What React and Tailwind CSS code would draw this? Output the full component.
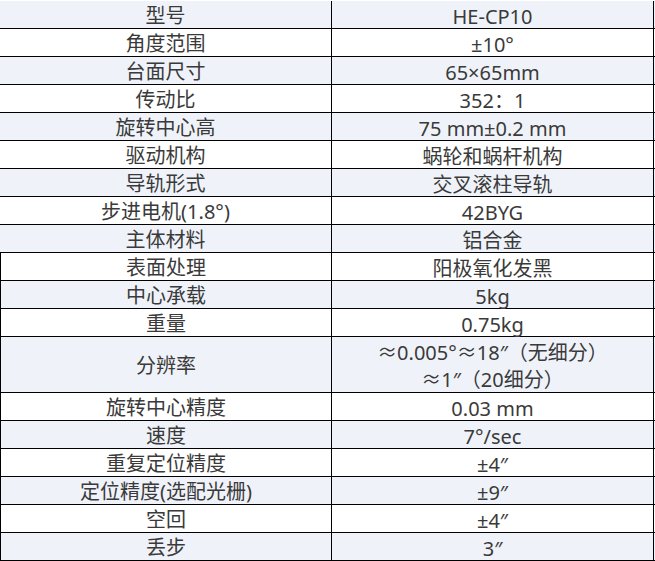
import React from 'react';

const specs = [
  ['型号', ['HE-CP10']],
  ['角度范围', ['±10°']],
  ['台面尺寸', ['65×65mm']],
  ['传动比', ['352：1']],
  ['旋转中心高', ['75 mm±0.2 mm']],
  ['驱动机构', ['蜗轮和蜗杆机构']],
  ['导轨形式', ['交叉滚柱导轨']],
  ['步进电机(1.8°)', ['42BYG']],
  ['主体材料', ['铝合金']],
  ['表面处理', ['阳极氧化发黑']],
  ['中心承载', ['5kg']],
  ['重量', ['0.75kg']],
  ['分辨率', ['≈0.005°≈18″（无细分）', '≈1″（20细分）']],
  ['旋转中心精度', ['0.03 mm']],
  ['速度', ['7°/sec']],
  ['重复定位精度', ['±4″']],
  ['定位精度(选配光栅)', ['±9″']],
  ['空回', ['±4″']],
  ['丢步', ['3″']],
];

function SpecRow({ label, values, striped, edge }) {
  const tall = values.length > 1;
  return (
    <div
      className={`flex border-b border-black leading-[27px] ${tall ? 'h-[56px]' : 'h-[28px]'} ${striped ? 'bg-[#eff3f9]' : 'bg-white'}`}
    >
      <div
        className={`w-[332px] shrink-0 flex items-center justify-center pt-[2px] border-r border-black ${edge ? 'border-l' : ''}`}
      >
        {label}
      </div>
      <div className="w-[322px] shrink-0 flex flex-col items-center justify-start pt-[2px] border-r border-black">
        {values.map((v, i) => (
          <div key={i} className="h-[27px] whitespace-nowrap">
            {v}
          </div>
        ))}
      </div>
    </div>
  );
}

export default function App() {
  return (
    <div className="w-[655px] h-[561px] bg-white pt-px overflow-hidden text-[20px] text-[#3a3a3a] font-['Noto_Sans','Noto_Sans_CJK_SC',sans-serif]">
      {specs.map(([label, values], index) => (
        <SpecRow
          key={label}
          label={label}
          values={values}
          striped={index % 2 === 0}
          edge={index >= 9}
        />
      ))}
    </div>
  );
}
